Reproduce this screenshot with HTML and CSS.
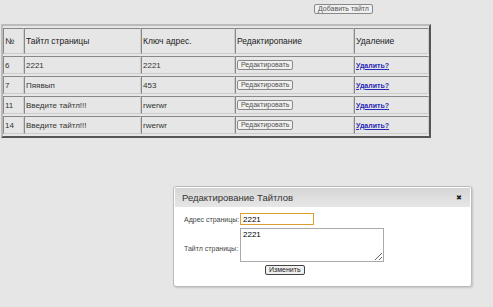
FILE: index.html
```html
<!DOCTYPE html>
<html lang="ru">
<head>
    <meta charset="UTF-8">
    <title>Тайтлы</title>
    <link rel="stylesheet" href="styles.css">
</head>
<body>
    <div class="top-bar">
        <button class="small-btn">Добавить тайтл</button>
    </div>
    <table class="titles">
        <tr class="head">
            <th class="c-id">№</th>
            <th class="c-title">Тайтл страницы</th>
            <th class="c-key">Ключ адрес.</th>
            <th class="c-edit">Редактиропание</th>
            <th class="c-del">Удаление</th>
        </tr>
        <tr>
            <td>6</td>
            <td>2221</td>
            <td>2221</td>
            <td><button class="small-btn">Редактировать</button></td>
            <td><a href="#">Удалить?</a></td>
        </tr>
        <tr>
            <td>7</td>
            <td>Пяявып</td>
            <td>453</td>
            <td><button class="small-btn">Редактировать</button></td>
            <td><a href="#">Удалить?</a></td>
        </tr>
        <tr>
            <td>11</td>
            <td>Введите тайтл!!!</td>
            <td>rwerwr</td>
            <td><button class="small-btn">Редактировать</button></td>
            <td><a href="#">Удалить?</a></td>
        </tr>
        <tr>
            <td>14</td>
            <td>Введите тайтл!!!</td>
            <td>rwerwr</td>
            <td><button class="small-btn">Редактировать</button></td>
            <td><a href="#">Удалить?</a></td>
        </tr>
    </table>

    <div class="dialog">
        <div class="dialog-title">
            <span>Редактирование Тайтлов</span>
            <span class="dialog-close">&#10006;</span>
        </div>
        <div class="dialog-body">
            <div class="form-row">
                <label>Адрес страницы:</label>
                <input type="text" class="addr" value="2221">
            </div>
            <div class="form-row">
                <label class="ta-label">Тайтл страницы:</label>
                <textarea>2221</textarea>
            </div>
            <div class="form-submit">
                <button class="small-btn dark">Изменить</button>
            </div>
        </div>
    </div>
</body>
</html>
```

FILE: styles.css
```css
/* Общие стили */
body {
    margin: 0;
    background-color: #e6e6e6;
    font-family: "Liberation Sans", Arial, sans-serif;
    font-size: 8px;
    color: #222;
    height: 307px;
    overflow: hidden;
}
.top-bar {
    height: 24px;
    padding-left: 314px;
    padding-top: 4px;
    box-sizing: border-box;
}
.small-btn {
    font-family: "Liberation Sans", Arial, sans-serif;
    font-size: 7px;
    color: #555;
    background: #f0f0f0;
    border: 1px solid #888;
    border-radius: 2px;
    padding: 0 3px;
    height: 10px;
    line-height: 8px;
    margin: 0;
}
.small-btn.dark {
    border-color: #444;
    color: #222;
}

/* Таблица */
.titles {
    margin-left: 1px;
    width: 430px;
    table-layout: fixed;
    border: 2px solid;
    border-color: #bbb #555 #555 #bbb;
    border-spacing: 0 2px;
    font-size: 8px;
}
.titles th,
.titles td {
    box-sizing: border-box;
    text-align: left;
    font-weight: normal;
    border: 1px solid;
    border-color: #888 #ccc #ccc #888;
    padding: 0 1px;
    height: 18px;
    white-space: nowrap;
    color: #333;
}
.titles th {
    height: 26px;
    font-size: 8.5px;
    color: #222;
}
.titles .c-id { width: 21px; }
.titles .c-title { width: 117px; }
.titles .c-key { width: 94px; }
.titles .c-edit { width: 119px; }
.titles a {
    color: #2a2ab8;
    font-weight: bold;
    font-size: 7px;
}

/* Диалог */
.dialog {
    position: absolute;
    left: 173px;
    top: 186px;
    width: 297px;
    height: 99px;
    background: #fff;
    border: 1px solid #bbb;
    border-radius: 3px;
    box-shadow: 1px 1px 2px rgba(0, 0, 0, 0.15);
}
.dialog-title {
    margin: 1px;
    height: 19px;
    background: linear-gradient(#d6d6d6, #e6e6e6);
    display: flex;
    justify-content: space-between;
    align-items: center;
    padding: 0 8px 0 7px;
    font-size: 9.5px;
    color: #333;
}
.dialog-close {
    font-size: 7px;
    color: #222;
}
.dialog-body {
    padding: 5px 0 0 10px;
}
.form-row {
    display: flex;
    align-items: center;
    gap: 2px;
    margin-bottom: 3px;
}
.form-row label {
    width: 54px;
    font-size: 7px;
    color: #444;
    white-space: nowrap;
}
.form-row .ta-label {
    text-align: right;
    align-self: flex-end;
    margin-bottom: 10px;
}
.addr {
    width: 74px;
    height: 12px;
    box-sizing: border-box;
    border: 1px solid #d9a030;
    font-size: 8px;
    padding: 0 2px;
    font-family: "Liberation Sans", Arial, sans-serif;
}
textarea {
    width: 144px;
    height: 34px;
    box-sizing: border-box;
    border: 1px solid #aaa;
    font-size: 8px;
    padding: 1px 2px;
    font-family: "Liberation Sans", Arial, sans-serif;
}
.form-submit {
    padding-left: 81px;
    margin-top: 1px;
}
```
